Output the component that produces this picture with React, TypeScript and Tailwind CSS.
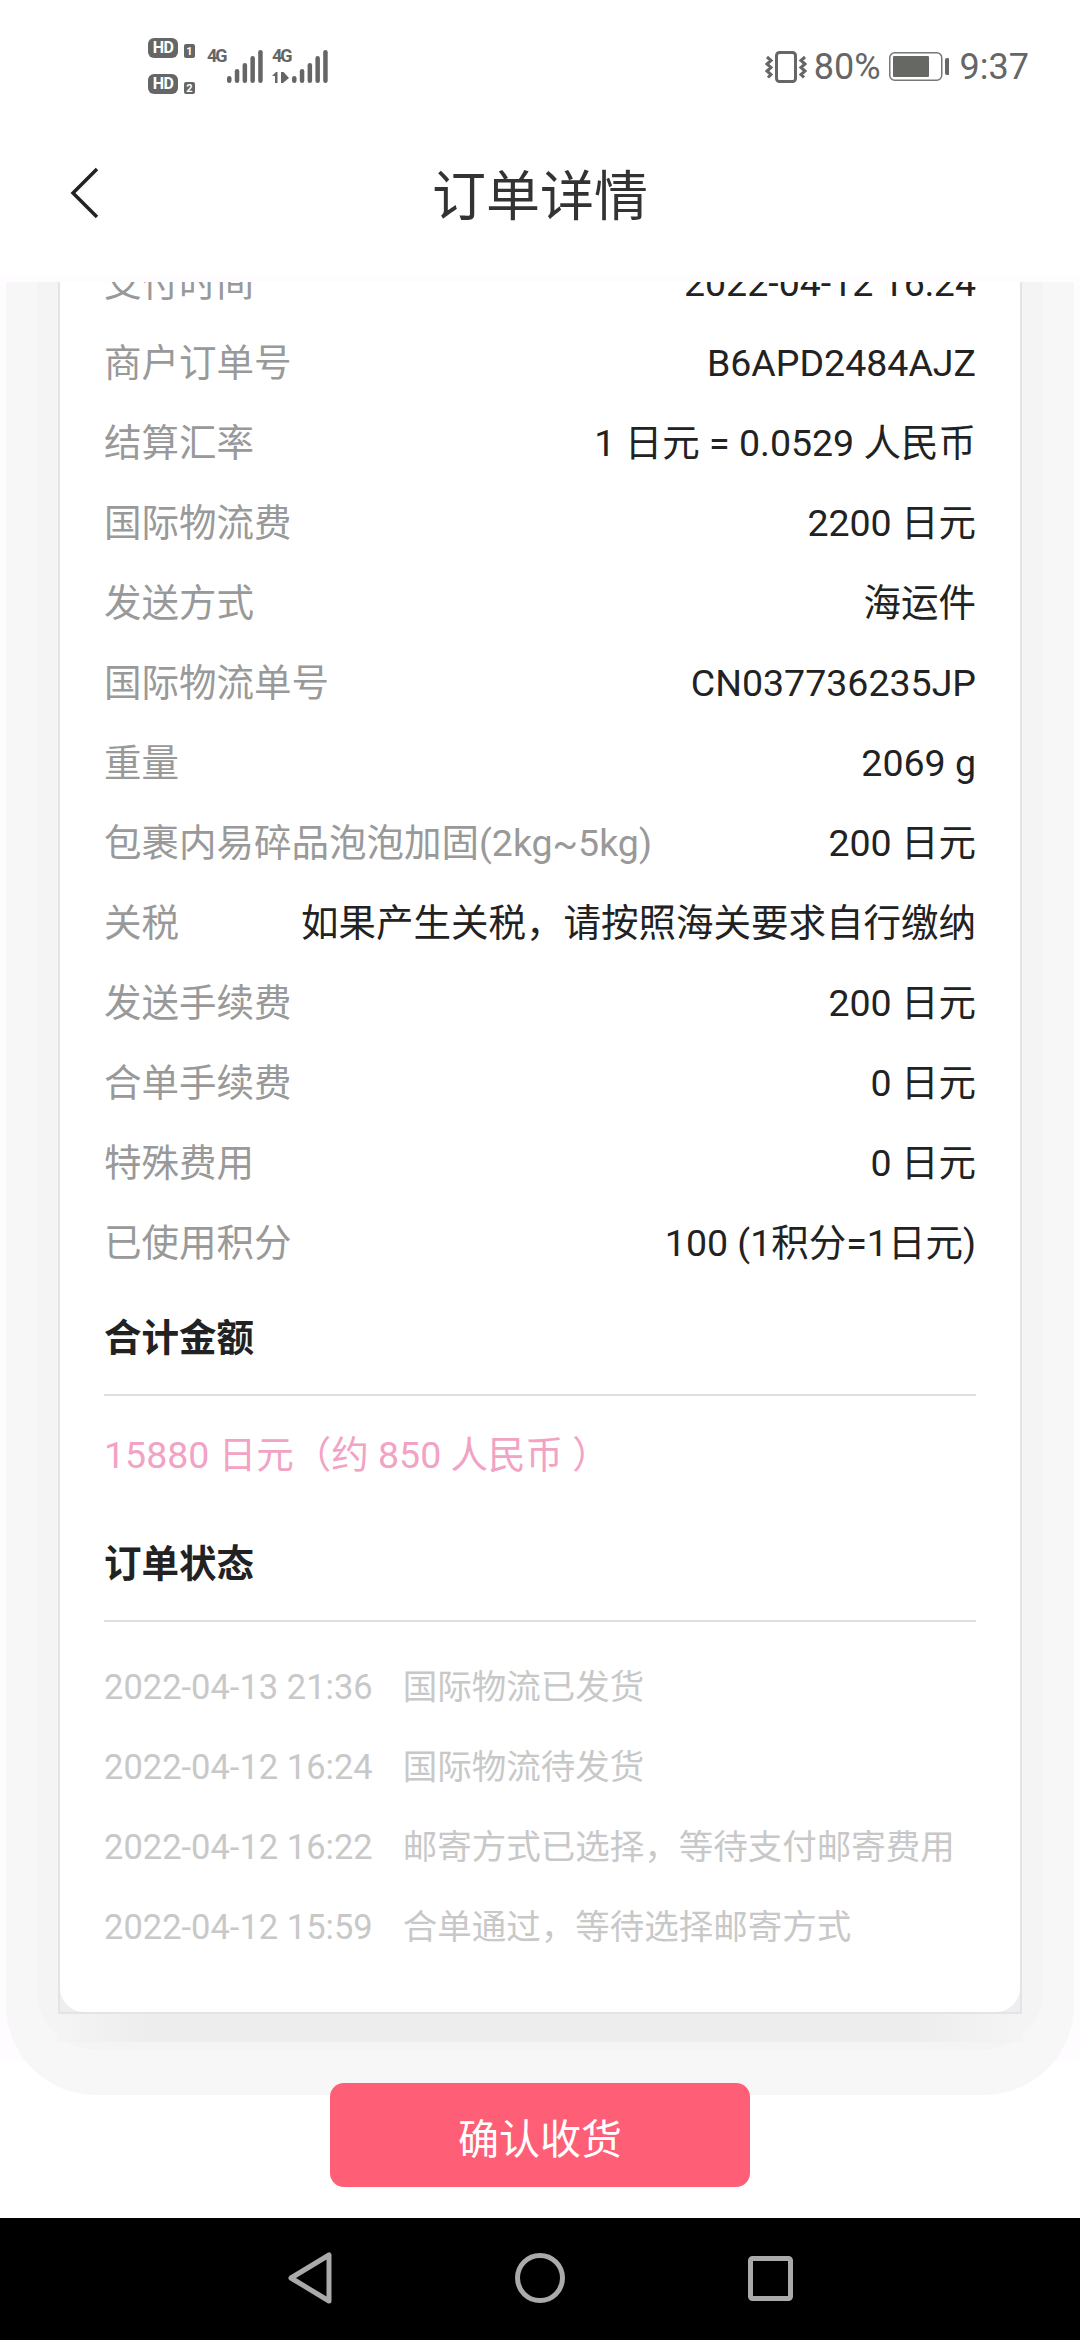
import React from 'react';

const font = { fontFamily: 'Roboto, "Noto Sans CJK SC", sans-serif' };

const rows: [string, string][] = [
  ['支付时间', '2022-04-12 16:24'],
  ['商户订单号', 'B6APD2484AJZ'],
  ['结算汇率', '1 日元 = 0.0529 人民币'],
  ['国际物流费', '2200 日元'],
  ['发送方式', '海运件'],
  ['国际物流单号', 'CN037736235JP'],
  ['重量', '2069 g'],
  ['包裹内易碎品泡泡加固(2kg~5kg)', '200 日元'],
  ['关税', '如果产生关税，请按照海关要求自行缴纳'],
  ['发送手续费', '200 日元'],
  ['合单手续费', '0 日元'],
  ['特殊费用', '0 日元'],
  ['已使用积分', '100 (1积分=1日元)'],
];

const logs: [string, string][] = [
  ['2022-04-13 21:36', '国际物流已发货'],
  ['2022-04-12 16:24', '国际物流待发货'],
  ['2022-04-12 16:22', '邮寄方式已选择，等待支付邮寄费用'],
  ['2022-04-12 15:59', '合单通过，等待选择邮寄方式'],
];

function Hd({ n, numH }: { n: string; numH: string }) {
  return (
    <div className="flex h-[20px] items-end gap-[6px]">
      <span className="flex h-[20px] w-[30px] items-center justify-center rounded-[6px] bg-[#666666] text-[16px] font-bold leading-none tracking-[-0.5px] text-white">HD</span>
      <span className={`flex ${numH} w-[11px] items-center justify-center rounded-[2px] bg-[#666666] text-[11px] font-bold leading-none text-white`}>{n}</span>
    </div>
  );
}

function Bars() {
  const heights = [7, 14, 20, 27, 33];
  return (
    <svg width="36" height="34" viewBox="0 0 36 34" className="block">
      {heights.map((h, i) => (
        <rect key={i} x={i * 7.8} y={34 - h} width="4.5" height={h} rx="2.25" fill="#666666" />
      ))}
    </svg>
  );
}

function StatusBar() {
  return (
    <div className="flex h-[100px] justify-between pl-[148px] pr-[51px] pt-[38px]">
      <div className="flex">
        <div className="flex flex-col gap-[16px]">
          <Hd n="1" numH="h-[14px]" />
          <Hd n="2" numH="h-[12px]" />
        </div>
        <div className="relative ml-[12px] mt-[11px] h-[34px] w-[56px]">
          <span className="absolute left-0 top-0 text-[18px] font-bold leading-[14px] tracking-[-2px] text-[#666666]">4G</span>
          <div className="absolute right-0 top-0"><Bars /></div>
        </div>
        <div className="relative ml-[9px] mt-[11px] h-[34px] w-[56px]">
          <span className="absolute left-0 top-0 text-[18px] font-bold leading-[14px] tracking-[-2px] text-[#666666]">4G</span>
          <svg width="18" height="11" viewBox="0 0 18 11" className="absolute bottom-0 left-0 block" fill="#666666">
            <path d="M0 4l4-4h1.5v11H3V4zM9 0h2.5l5.5 6-6 5H9z" />
          </svg>
          <div className="absolute right-0 top-0"><Bars /></div>
        </div>
      </div>
      <div className="mt-[7px] flex h-[44px] items-center text-[36px] leading-none text-[#666666]">
        <svg width="42" height="32" viewBox="0 0 42 32" fill="none" stroke="#666666" className="block">
          <rect x="11.5" y="1.5" width="19" height="29" rx="3" strokeWidth="3" />
          <path d="M2 6l4 3.5-4 3.5 4 3.5-4 3.5 4 3.5-3 3M40 6l-4 3.5 4 3.5-4 3.5 4 3.5-4 3.5 3 3" strokeWidth="3" />
        </svg>
        <span className="ml-[7px]">80%</span>
        <svg width="60" height="30" viewBox="0 0 60 30" className="ml-[8px] block">
          <rect x="0.75" y="0.75" width="52" height="27.5" rx="5" fill="none" stroke="#777777" strokeWidth="1.5" />
          <rect x="4" y="4" width="36" height="21" rx="1" fill="#666864" />
          <rect x="56" y="6" width="4.5" height="17" rx="2" fill="#666666" />
        </svg>
        <span className="ml-[11px]">9:37</span>
      </div>
    </div>
  );
}

function NavBar() {
  return (
    <div className="flex h-[122px] shrink-0 items-center justify-center bg-black pb-[2px]">
      <div className="flex w-[505px] items-center justify-between">
        <svg width="44" height="52" viewBox="0 0 44 52" fill="none" stroke="#aaaaaa" strokeWidth="5" strokeLinejoin="round">
          <path d="M41 3v46L3 26z" />
        </svg>
        <svg width="50" height="50" viewBox="0 0 50 50" fill="none" stroke="#aaaaaa" strokeWidth="5">
          <circle cx="25" cy="25" r="22.5" />
        </svg>
        <svg width="45" height="45" viewBox="0 0 45 45" fill="none" stroke="#aaaaaa" strokeWidth="5" strokeLinejoin="round">
          <rect x="2.5" y="2.5" width="40" height="40" rx="2" />
        </svg>
      </div>
    </div>
  );
}

export default function App() {
  return (
    <div className="relative flex h-[2340px] w-[1080px] flex-col overflow-hidden bg-white" style={font}>
      <div className="relative z-10 h-[282px] shrink-0 border-b-[6px] border-[#fefcfe] bg-white">
        <StatusBar />
        <div className="relative flex h-[176px] items-start justify-center pt-[71px]">
          <svg width="32" height="54" viewBox="0 0 32 54" className="absolute left-[69px] top-[67px]" fill="none" stroke="#222222" strokeWidth="3.5">
            <path d="M28 2L4 26l24 24" />
          </svg>
          <span className="text-[54px] leading-[54px] text-[#333333]">订单详情</span>
        </div>
      </div>

      <div className="min-h-0 flex-1 overflow-hidden bg-white">
        <div className="h-[1818px] bg-[#fefcfe]">
          <div className="mx-[6px] rounded-b-[90px] bg-[#f8f7f8] pb-[45px]">
            <div className="mx-[31px] rounded-b-[60px] bg-[#f5f4f5] pb-[8px]">
              <div className="mx-[21px] border-2 border-t-0 border-[#e4e3e6] bg-[#eeedef]">
                <div className="rounded-b-[24px] bg-white px-[44px] pb-[44px]">
                  <div className="mt-[-39px]">
                    {rows.map(([label, value]) => (
                      <div key={label} className="flex h-[80px] items-center justify-between whitespace-nowrap text-[37.5px]">
                        <span className="text-[#999999]">{label}</span>
                        <span className="text-[#222222]">{value}</span>
                      </div>
                    ))}
                  </div>
                  <div className="mt-[27px] flex h-[56px] items-center text-[37.5px] font-bold text-[#222222]">合计金额</div>
                  <div className="mt-[28px] border-t-2 border-[#dedede]" />
                  <div className="mt-[29px] flex h-[60px] items-center text-[37.5px] text-[#f2a3c4]">15880 日元（约 850 人民币 ）</div>
                  <div className="mt-[51px] flex h-[56px] items-center text-[37.5px] font-bold text-[#222222]">订单状态</div>
                  <div className="mt-[28px] border-t-2 border-[#dedede]" />
                  <div className="mt-[26px]">
                    {logs.map(([time, text]) => (
                      <div key={time} className="flex h-[80px] items-center gap-[30px] whitespace-nowrap text-[34.5px] text-[#c8c8c8]">
                        <span>{time}</span>
                        <span>{text}</span>
                      </div>
                    ))}
                  </div>
                </div>
              </div>
              <div className="mx-[21px] h-[28px] bg-[linear-gradient(90deg,#f5f4f5_0%,#eeedee_10%,#eeedee_88%,#f5f4f5_100%)]" />
            </div>
          </div>
        </div>
      </div>

      <NavBar />

      <button className="absolute left-[330px] top-[2083px] flex h-[104px] w-[420px] items-center justify-center rounded-[14px] bg-[#ff5f76] pt-[12px] text-[41px] text-white">
        确认收货
      </button>
    </div>
  );
}
